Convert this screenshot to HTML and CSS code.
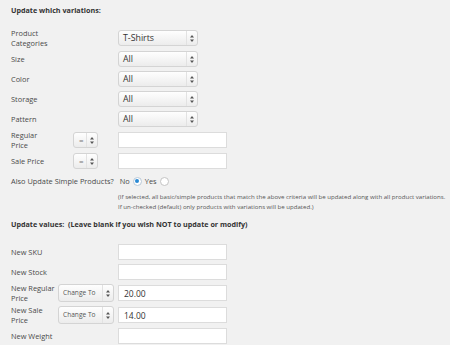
FILE: index.html
```html
<!DOCTYPE html>
<html lang="en">
<head>
  <meta charset="UTF-8" />
  <title>Bulk edit variations</title>
  <link rel="stylesheet" href="styles.css">
</head>
<body>
  <h3 class="section-title">Update which variations:</h3>

  <div class="rows">
    <div class="row two-line">
      <label class="row-label">Product Categories</label>
      <div class="select wide"><span class="select-text">T-Shirts</span><span class="select-arrow"><svg width="4" height="7" viewBox="0 0 4 7"><path d="M2 0 L4 2.6 L0 2.6 Z M2 7 L4 4.4 L0 4.4 Z" fill="#555"/></svg></span></div>
    </div>
    <div class="row">
      <label class="row-label">Size</label>
      <div class="select wide"><span class="select-text">All</span><span class="select-arrow"><svg width="4" height="7" viewBox="0 0 4 7"><path d="M2 0 L4 2.6 L0 2.6 Z M2 7 L4 4.4 L0 4.4 Z" fill="#555"/></svg></span></div>
    </div>
    <div class="row">
      <label class="row-label">Color</label>
      <div class="select wide"><span class="select-text">All</span><span class="select-arrow"><svg width="4" height="7" viewBox="0 0 4 7"><path d="M2 0 L4 2.6 L0 2.6 Z M2 7 L4 4.4 L0 4.4 Z" fill="#555"/></svg></span></div>
    </div>
    <div class="row">
      <label class="row-label">Storage</label>
      <div class="select wide"><span class="select-text">All</span><span class="select-arrow"><svg width="4" height="7" viewBox="0 0 4 7"><path d="M2 0 L4 2.6 L0 2.6 Z M2 7 L4 4.4 L0 4.4 Z" fill="#555"/></svg></span></div>
    </div>
    <div class="row">
      <label class="row-label">Pattern</label>
      <div class="select wide"><span class="select-text">All</span><span class="select-arrow"><svg width="4" height="7" viewBox="0 0 4 7"><path d="M2 0 L4 2.6 L0 2.6 Z M2 7 L4 4.4 L0 4.4 Z" fill="#555"/></svg></span></div>
    </div>
    <div class="row two-line">
      <div class="row-label with-op">
        <label class="op-label">Regular Price</label>
        <div class="select tiny"><span class="select-text">=</span><span class="select-arrow"><svg width="4" height="7" viewBox="0 0 4 7"><path d="M2 0 L4 2.6 L0 2.6 Z M2 7 L4 4.4 L0 4.4 Z" fill="#555"/></svg></span></div>
      </div>
      <input class="text-input" type="text">
    </div>
    <div class="row">
      <div class="row-label with-op">
        <label class="op-label">Sale Price</label>
        <div class="select tiny"><span class="select-text">=</span><span class="select-arrow"><svg width="4" height="7" viewBox="0 0 4 7"><path d="M2 0 L4 2.6 L0 2.6 Z M2 7 L4 4.4 L0 4.4 Z" fill="#555"/></svg></span></div>
      </div>
      <input class="text-input" type="text">
    </div>
    <div class="row simple-row">
      <span class="simple-label">Also Update Simple Products?</span>
      <span class="choice">No <span class="radio checked"></span></span>
      <span class="choice">Yes <span class="radio"></span></span>
    </div>
    <p class="note">(If selected, all basic/simple products that match the above criteria will be updated along with all product variations.<br>If un-checked (default) only products with variations will be updated.)</p>
  </div>

  <h3 class="section-title values-title">Update values: &nbsp;(Leave blank if you wish NOT to update or modify)</h3>

  <div class="rows">
    <div class="row">
      <label class="row-label">New SKU</label>
      <input class="text-input" type="text">
    </div>
    <div class="row">
      <label class="row-label">New Stock</label>
      <input class="text-input" type="text">
    </div>
    <div class="row two-line">
      <div class="row-label with-op">
        <label class="op-label new">New Regular Price</label>
        <div class="select change"><span class="select-text">Change To</span><span class="select-arrow"><svg width="4" height="7" viewBox="0 0 4 7"><path d="M2 0 L4 2.6 L0 2.6 Z M2 7 L4 4.4 L0 4.4 Z" fill="#555"/></svg></span></div>
      </div>
      <input class="text-input" type="text" value="20.00">
    </div>
    <div class="row two-line">
      <div class="row-label with-op">
        <label class="op-label new">New Sale Price</label>
        <div class="select change"><span class="select-text">Change To</span><span class="select-arrow"><svg width="4" height="7" viewBox="0 0 4 7"><path d="M2 0 L4 2.6 L0 2.6 Z M2 7 L4 4.4 L0 4.4 Z" fill="#555"/></svg></span></div>
      </div>
      <input class="text-input" type="text" value="14.00">
    </div>
    <div class="row">
      <label class="row-label">New Weight</label>
      <input class="text-input" type="text">
    </div>
  </div>
</body>
</html>
```

FILE: styles.css
```css
* { box-sizing: border-box; margin: 0; padding: 0; }
body {
  font-family: "Open Sans", "Liberation Sans", sans-serif;
  font-size: 7.4px;
  line-height: 10.5px;
  color: #4a4a4a;
  background: #f1f1f1;
  padding: 5px 0 0 11px;
}
.section-title {
  font-size: 7.2px;
  font-weight: 700;
  color: #333;
  line-height: 10px;
  margin-bottom: 12px;
}
.values-title {
  margin-top: 7px;
  margin-bottom: 13px;
}
.row {
  display: flex;
  align-items: center;
  min-height: 20px;
}
.row.two-line {
  min-height: 22px;
}
.row-label {
  flex: 0 0 107px;
  padding-right: 61px;
}
.row-label.with-op {
  display: flex;
  align-items: center;
  padding-right: 0;
}
.op-label {
  width: 44px;
}
.op-label.new {
  width: 46px;
}
.select {
  display: flex;
  align-items: center;
  height: 16px;
  border: 1px solid #d4d4d4;
  border-radius: 3px;
  background: linear-gradient(#fefefe, #ececec);
  color: #333;
  font-size: 8.8px;
}
.select-text {
  flex: 1;
  padding-left: 4px;
  white-space: nowrap;
  overflow: hidden;
}
.select-arrow {
  display: flex;
  align-items: center;
  justify-content: center;
  width: 11px;
  height: 100%;
  border-left: 1px solid #e2e2e2;
}
.select.wide { width: 80px; }
.select.tiny {
  width: 25px;
  margin-left: 18px;
  color: #777;
  font-size: 8px;
}
.select.tiny .select-text { padding-left: 5px; }
.select.change {
  width: 56px;
  height: 18px;
  margin-left: 1px;
  font-size: 6.6px;
  color: #555;
}
.text-input {
  width: 109px;
  height: 16px;
  border: 1px solid #dcdcdc;
  background: #fff;
  font-family: inherit;
  font-size: 8.5px;
  color: #333;
  padding: 0 5px;
  outline: none;
}
.simple-label { margin-right: 6px; }
.choice {
  display: inline-flex;
  align-items: center;
  gap: 3px;
  margin-right: 3px;
}
.radio {
  display: inline-block;
  width: 9px;
  height: 9px;
  border: 1px solid #c4c4c4;
  border-radius: 50%;
  background: #fff;
  position: relative;
}
.radio.checked {
  border-color: #b8c8d8;
}
.radio.checked::after {
  content: "";
  position: absolute;
  left: 1.5px;
  top: 1.5px;
  width: 4px;
  height: 4px;
  border-radius: 50%;
  background: #2a8ad4;
}
.note {
  font-size: 6.1px;
  line-height: 10px;
  color: #555;
  padding-left: 107px;
  margin-top: 1px;
}
```
